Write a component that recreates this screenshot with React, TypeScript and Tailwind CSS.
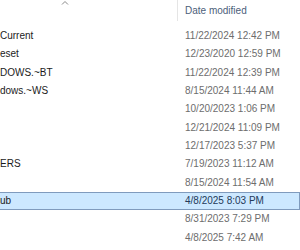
import React from "react";

const rows: { name: string; date: string; sel?: boolean }[] = [
  { name: "Current", date: "11/22/2024 12:42 PM" },
  { name: "eset", date: "12/23/2020 12:59 PM" },
  { name: "DOWS.~BT", date: "11/22/2024 12:39 PM" },
  { name: "dows.~WS", date: "8/15/2024 11:44 AM" },
  { name: "", date: "10/20/2023 1:06 PM" },
  { name: "", date: "12/21/2024 11:09 PM" },
  { name: "", date: "12/17/2023 5:37 PM" },
  { name: "ERS", date: "7/19/2023 11:12 AM" },
  { name: "", date: "8/15/2024 11:54 AM" },
  { name: "ub", date: "4/8/2025 8:03 PM", sel: true },
  { name: "", date: "8/31/2023 7:29 PM" },
  { name: "", date: "4/8/2025 7:42 AM" },
];

export default function App() {
  return (
    <div
      className="w-[300px] h-[250px] overflow-hidden bg-white text-[10px] leading-none"
      style={{ fontFamily: '"Liberation Sans", Arial, sans-serif' }}
    >
      <div className="flex h-[22px]">
        <div className="w-[177px]">
          <svg width="177" height="8" viewBox="0 0 177 8" className="block">
            <polyline
              points="62,4.5 65,1.5 68,4.5"
              fill="none"
              stroke="#8a8a8a"
              strokeWidth="1"
            />
          </svg>
        </div>
        <div className="w-px h-[21px] bg-[#e5e5e5]" />
        <div className="flex items-center pl-[7px] text-[#4c607a]">Date modified</div>
      </div>
      <div className="pt-[5px] flex flex-col">
        {rows.map((r, i) => (
          <div
            key={i}
            className={
              r.sel
                ? "flex items-center h-[18.33px] bg-[#cce8ff] border-y border-r border-[#7f9bbd]"
                : "flex items-center h-[18.33px]"
            }
          >
            <div className="w-[185px] whitespace-nowrap text-[#1b1b1b]">{r.name}</div>
            <div
              className={
                r.sel
                  ? "text-[#243a5a] whitespace-nowrap"
                  : "text-[#6d6d6d] whitespace-nowrap"
              }
            >
              {r.date}
            </div>
          </div>
        ))}
      </div>
    </div>
  );
}
